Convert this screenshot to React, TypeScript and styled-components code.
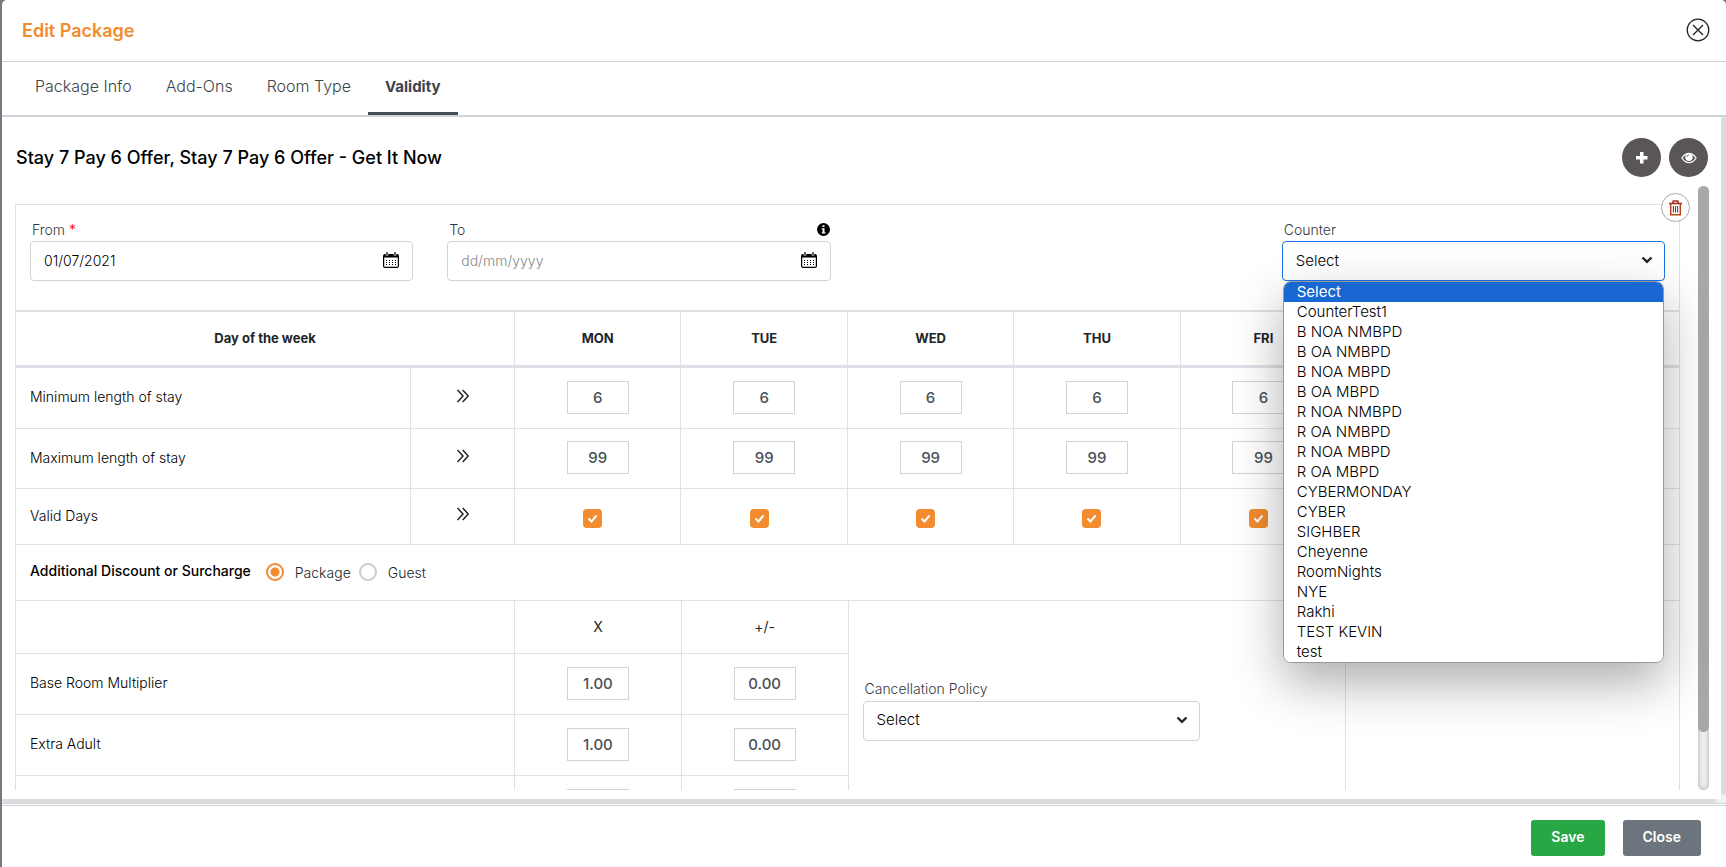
import React, { useState } from "react";
import styled, { createGlobalStyle, css } from "styled-components";

const DAYS = ["MON", "TUE", "WED", "THU", "FRI", "SAT", "SUN"];
const TABS = ["Package Info", "Add-Ons", "Room Type", "Validity"];
const COUNTERS = [
  "Select", "CounterTest1", "B NOA NMBPD", "B OA NMBPD", "B NOA MBPD", "B OA MBPD",
  "R NOA NMBPD", "R OA NMBPD", "R NOA MBPD", "R OA MBPD", "CYBERMONDAY", "CYBER",
  "SIGHBER", "Cheyenne", "RoomNights", "NYE", "Rakhi", "TEST KEVIN", "test",
];
const STAY_RULES = [
  { label: "Minimum length of stay", value: "6", height: 61 },
  { label: "Maximum length of stay", value: "99", height: 60 },
];
const RATES = [
  { label: "Base Room Multiplier", times: "1.00", plus: "0.00" },
  { label: "Extra Adult", times: "1.00", plus: "0.00" },
  { label: "", times: "", plus: "" },
];

const line = "#dee2e6";
const border = "#ced4da";
const orange = "#f28c2e";

const GlobalStyle = createGlobalStyle`
  *, *::before, *::after { box-sizing: border-box; }
  body { margin: 0; background: #77797c; overflow: hidden; }
  body, button, input, select { font-family: Inter, "Liberation Sans", sans-serif; }
`;

const Modal = styled.div`
  display: flex;
  flex-direction: column;
  height: 100vh;
  margin-left: 2px;
  background: #fff;
  border-radius: 5px 5px 0 0;
  color: #212529;
  font-size: 14px;
  overflow: hidden;
`;

const Header = styled.header`
  display: flex;
  align-items: center;
  justify-content: space-between;
  height: 62px;
  padding: 0 16px 1px 20px;
  border-bottom: 1px solid ${border};
  flex: none;
`;

const Title = styled.h1`
  margin: 0;
  color: ${orange};
  font-size: 18px;
  font-weight: 600;
`;

const IconButton = styled.button`
  display: flex;
  padding: 0;
  border: 0;
  background: none;
  color: #212529;
  cursor: pointer;
`;

const TabBar = styled.nav`
  display: flex;
  height: 55px;
  padding-left: 16px;
  border-bottom: 2px solid ${border};
  flex: none;
`;

const Tab = styled.button<{ $active?: boolean }>`
  padding: 0 17px 2px;
  border: 0;
  border-bottom: 3px solid ${(p) => (p.$active ? "#454d55" : "transparent")};
  background: none;
  color: #3d444b;
  font-size: ${(p) => (p.$active ? 15 : 16)}px;
  font-weight: ${(p) => (p.$active ? 700 : 300)};
`;

const Body = styled.div`
  display: flex;
  flex: 1;
  min-height: 0;
`;

const Content = styled.main`
  display: flex;
  flex-direction: column;
  flex: 1;
  min-width: 0;
`;

const TitleRow = styled.div`
  display: flex;
  align-items: center;
  justify-content: space-between;
  height: 69px;
  padding: 12px 13px 0 14px;
  flex: none;
`;

const OfferTitle = styled.h2`
  margin: 0;
  color: #000;
  font-size: 18px;
  font-weight: 500;
`;

const RoundGroup = styled.div`
  display: flex;
  gap: 8px;
`;

const RoundButton = styled.button`
  display: flex;
  align-items: center;
  justify-content: center;
  width: 39px;
  height: 39px;
  padding: 0;
  border: 0;
  border-radius: 50%;
  background: #5b5656;
  color: #fff;
`;

const ScrollArea = styled.div`
  display: flex;
  flex: 1;
  min-height: 0;
  margin-bottom: 9px;
  padding: 0 12px 0 13px;
`;

const Viewport = styled.div`
  flex: 1;
  min-width: 0;
  margin-right: 18px;
  padding-top: 18px;
`;

const Clip = styled.div`
  flex: 1;
  min-height: 0;
  overflow: hidden;
`;

const Track = styled.div`
  width: 11px;
  border-radius: 6px;
  background: #ececec;
  box-shadow: inset 0 0 4px rgba(0, 0, 0, 0.3);
`;

const Thumb = styled.div`
  height: 90.4%;
  border-radius: 6px;
  background: #a8a8a8;
`;

const OuterTrack = styled.div`
  width: 5px;
  background: #f1f1f1;
  flex: none;
`;

const OuterThumb = styled.div`
  height: calc(100% - 4px);
  border-radius: 3px;
  background: #dcdcdc;
`;

const BottomTrack = styled.div`
  height: 4px;
  padding-right: 10px;
  background: #f1f1f1;
  flex: none;
`;

const BottomThumb = styled.div`
  height: 4px;
  border-radius: 2px;
  background: #dcdcdc;
`;

const Card = styled.section`
  position: relative;
  display: flex;
  flex-direction: column;
  border: 1px solid ${line};
  border-bottom: 0;
  height: 100%;
`;

const Trash = styled.button`
  position: absolute;
  top: -12px;
  right: -11px;
  z-index: 2;
  display: flex;
  align-items: center;
  justify-content: center;
  width: 29px;
  height: 29px;
  padding: 0;
  border: 1px solid #aaa;
  border-radius: 50%;
  background: #fff;
  color: #a8281e;
`;

const FieldGrid = styled.div`
  display: grid;
  grid-template-columns: repeat(4, 1fr);
  gap: 34px;
  height: 105px;
  padding: 15px 14px 0;
  flex: none;
`;

const Field = styled.div`
  position: relative;
  min-width: 0;
`;

const LabelRow = styled.div`
  display: flex;
  align-items: center;
  justify-content: space-between;
  height: 21px;
  padding: 0 1px 3px 2px;
`;

const Label = styled.label`
  color: #343a40;
  font-size: 14px;
  font-weight: 300;
`;

const Required = styled.span`
  color: #f00;
`;

const InputBox = styled.div<{ $focus?: boolean }>`
  display: flex;
  align-items: center;
  height: 40px;
  padding: 0 13px 2px 0;
  border: 1px solid ${(p) => (p.$focus ? "#1a73e8" : border)};
  border-radius: 4px;
  background: #fff;
`;

const SelectBox = styled(InputBox)`
  padding-right: 11px;
`;

const controlText = css`
  flex: 1;
  min-width: 0;
  height: 36px;
  padding: 0 13px;
  border: 0;
  outline: 0;
  background: none;
  color: #000;
`;

const DateInput = styled.input`
  ${controlText}
  font-size: 14px;
  font-weight: 300;
  &::placeholder { color: #888; }
`;

const Select = styled.select`
  ${controlText}
  appearance: none;
  font-size: 15px;
  font-weight: 300;
`;

const Menu = styled.ul`
  position: absolute;
  top: 61px;
  left: 1px;
  right: 1px;
  z-index: 3;
  margin: 0;
  padding: 0;
  border: 1px solid #999;
  border-radius: 8px;
  background: #fff;
  box-shadow: 0 20px 50px rgba(0, 0, 0, 0.32);
  list-style: none;
  overflow: hidden;
`;

const Option = styled.li<{ $selected?: boolean }>`
  height: 20px;
  padding-left: 13px;
  background: ${(p) => (p.$selected ? "#1967d2" : "#fff")};
  color: ${(p) => (p.$selected ? "#fff" : "#000")};
  font-size: 15px;
  font-weight: ${(p) => (p.$selected ? 400 : 300)};
  line-height: 20px;
`;

const Table = styled.table`
  width: 100%;
  border-collapse: separate;
  border-spacing: 0;
  table-layout: fixed;
`;

const HeadCell = styled.th`
  height: 58px;
  padding: 0 0 2px;
  border-top: 2px solid ${line};
  border-bottom: 3px solid ${line};
  border-left: 1px solid ${line};
  font-size: 13px;
  font-weight: 700;
  &:first-child { border-left: 0; }
`;

const Cell = styled.td<{ $h: number; $left?: boolean }>`
  height: ${(p) => p.$h}px;
  padding: ${(p) => (p.$left ? "0 14px 3px" : "0 0 2px")};
  border-bottom: 1px solid ${line};
  border-left: 1px solid ${line};
  color: ${(p) => (p.$left ? "#000" : "inherit")};
  font-weight: ${(p) => (p.$left ? 300 : 400)};
  text-align: ${(p) => (p.$left ? "left" : "center")};
  &:first-child { border-left: 0; }
`;

const NumberInput = styled.input`
  display: block;
  width: 62px;
  height: 33px;
  margin: 0 auto;
  padding: 0;
  border: 1px solid ${border};
  border-radius: 0;
  color: #495057;
  font-size: 15px;
  font-weight: 500;
  text-align: center;
`;

const Check = styled.input`
  appearance: none;
  display: block;
  width: 19px;
  height: 19px;
  margin: 6px auto 0;
  border-radius: 4px;
  background: #fff;
  border: 1px solid ${border};
  &:checked {
    border: 0;
    background: ${orange}
      url("data:image/svg+xml,%3Csvg xmlns='http://www.w3.org/2000/svg' viewBox='0 0 19 19'%3E%3Cpath d='M5.5 9.5l3 3 5-6' fill='none' stroke='%23fff' stroke-width='2'/%3E%3C/svg%3E");
  }
`;

const CheckWrap = styled.div`
  padding-right: 10px;
`;

const SurchargeRow = styled.fieldset`
  display: flex;
  align-items: center;
  height: 56px;
  margin: 0;
  padding: 0 14px 1px;
  border: 0;
  border-bottom: 1px solid ${line};
`;

const SurchargeTitle = styled.span`
  margin-right: 15px;
  padding-bottom: 4px;
  font-weight: 500;
  color: #000;
`;

const RadioLabel = styled.label`
  display: flex;
  align-items: center;
  gap: 11px;
  margin-right: 8px;
  color: #212529;
  font-weight: 300;
`;

const Radio = styled.input`
  appearance: none;
  width: 18px;
  height: 18px;
  margin: 0;
  border: 2px solid #ccc;
  border-radius: 50%;
  &:checked {
    border-color: ${orange};
    background: radial-gradient(circle, ${orange} 0 4px, #fff 5px);
  }
`;

const Lower = styled.div`
  display: grid;
  grid-template-columns: 5fr 3fr 2fr;
`;

const PolicyPane = styled.div`
  display: flex;
  flex-direction: column;
  justify-content: center;
  padding: 0 14px 18px;
  border-left: 1px solid ${line};
  border-right: 1px solid ${line};
`;

const PolicyField = styled.div`
  width: 72%;
`;

const Footer = styled.footer`
  display: flex;
  justify-content: flex-end;
  gap: 18px;
  height: 64px;
  padding: 14px 25px 0;
  border-top: 3px double ${border};
  flex: none;
`;

const FooterButton = styled.button<{ $tone: string }>`
  height: 36px;
  padding: 0 20px 3px;
  border: 0;
  border-radius: 3px;
  background: ${(p) => p.$tone};
  color: #fff;
  font-size: 14px;
  font-weight: 600;
`;

const CloseIcon = () => (
  <svg width="24" height="24" viewBox="0 0 24 24" fill="none" stroke="currentColor">
    <circle cx="12" cy="12" r="10.8" strokeWidth="1.3" />
    <path d="M7 7l10 10M17 7L7 17" strokeWidth="1.4" />
  </svg>
);
const PlusIcon = () => (
  <svg width="13" height="13" viewBox="0 0 13 13" fill="currentColor">
    <path d="M5 1h3.500v4h4v3.500h-4v4H5v-4H1V5h4z" />
  </svg>
);
const EyeIcon = () => (
  <svg width="16" height="12" viewBox="0 0 16 12">
    <path d="M1 6C3 2.6 5.3 1.3 8 1.3S13 2.6 15 6C13 9.4 10.7 10.7 8 10.7S3 9.4 1 6z" fill="none" stroke="#fff" strokeWidth="1.3" />
    <circle cx="8" cy="5.2" r="3.7" fill="#fff" />
    <path d="M6 5a2 2 0 0 1 2-2" fill="none" stroke="#5b5656" strokeWidth="0.8" />
  </svg>
);
const TrashIcon = () => (
  <svg width="15" height="16" viewBox="0 0 15 16" fill="none" stroke="currentColor" strokeWidth="1.5">
    <path d="M1 3.5h13M4.500 3.500L5.300 1h4.400l.8 2.500" />
    <path d="M2.700 3.500v11.300h9.600V3.500" stroke="#b5431c" />
    <path d="M5.400 6v6.500M7.500 6v6.500M9.600 6v6.500" stroke="#8a2a55" strokeWidth="1.1" />
  </svg>
);
const CalendarIcon = () => (
  <svg width="16" height="16" viewBox="0 0 16 16">
    <rect x="0.6" y="2.6" width="14.8" height="12.8" rx="1.5" fill="#fff" stroke="#000" strokeWidth="1.2" />
    <path d="M1 2.5h14v3H1z" fill="#000" />
    <path d="M4 0v3.500M12 0v3.500" stroke="#fff" strokeWidth="2.6" />
    <path d="M4 0v3M12 0v3" stroke="#000" strokeWidth="1.2" />
    <path d="M3 8.500h10M3 10.500h10M3 12.500h10" stroke="#000" strokeWidth="1" strokeDasharray="1 2" />
  </svg>
);
const InfoIcon = () => (
  <svg width="13" height="13" viewBox="0 0 13 13">
    <circle cx="6.5" cy="6.5" r="6.5" fill="#000" />
    <path d="M5.500 2.300h2v1.700h-2zM4.800 5.200h2.700v4h.8v1.200H4.800V9.200h.7V6.400h-.7z" fill="#fff" />
  </svg>
);
const ChevronIcon = () => (
  <svg width="12" height="8" viewBox="0 0 12 8" fill="none" stroke="#212529" strokeWidth="2.4">
    <path d="M1.500 1.500L6 5.800l4.500-4.300" />
  </svg>
);
const DoubleArrow = () => (
  <svg width="14" height="14" viewBox="0 0 14 14" fill="none" stroke="#212529" strokeWidth="1.5">
    <path d="M1.500 1l5.500 6-5.500 6M6.700 1l5.500 6-5.500 6" />
  </svg>
);

const DayColumns = () => (
  <colgroup>
    <col style={{ width: "23.7%" }} />
    <col style={{ width: "6.25%" }} />
    {DAYS.map((d) => <col key={d} />)}
  </colgroup>
);

export default function App() {
  const [tab, setTab] = useState("Validity");
  return (
    <>
      <GlobalStyle />
      <Modal role="dialog" aria-label="Edit Package">
        <Header>
          <Title>Edit Package</Title>
          <IconButton aria-label="Close dialog"><CloseIcon /></IconButton>
        </Header>
        <TabBar>
          {TABS.map((t) => (
            <Tab key={t} $active={t === tab} onClick={() => setTab(t)}>{t}</Tab>
          ))}
        </TabBar>
        <Body>
          <Content>
            <TitleRow>
              <OfferTitle>Stay 7 Pay 6 Offer, Stay 7 Pay 6 Offer - Get It Now</OfferTitle>
              <RoundGroup>
                <RoundButton aria-label="Add"><PlusIcon /></RoundButton>
                <RoundButton aria-label="Preview"><EyeIcon /></RoundButton>
              </RoundGroup>
            </TitleRow>
            <ScrollArea>
              <Viewport>
                <Card>
                  <Trash aria-label="Delete"><TrashIcon /></Trash>
                  <FieldGrid>
                    <Field>
                      <LabelRow><Label htmlFor="from">From <Required>*</Required></Label></LabelRow>
                      <InputBox><DateInput id="from" defaultValue="01/07/2021" /><CalendarIcon /></InputBox>
                    </Field>
                    <Field>
                      <LabelRow><Label htmlFor="to">To</Label><InfoIcon /></LabelRow>
                      <InputBox><DateInput id="to" placeholder="dd/mm/yyyy" /><CalendarIcon /></InputBox>
                    </Field>
                    <div />
                    <Field>
                      <LabelRow><Label htmlFor="counter">Counter</Label></LabelRow>
                      <SelectBox $focus>
                        <Select id="counter" defaultValue="Select">
                          {COUNTERS.map((c) => <option key={c}>{c}</option>)}
                        </Select>
                        <ChevronIcon />
                      </SelectBox>
                      <Menu>
                        {COUNTERS.map((c, i) => <Option key={c} $selected={i === 0}>{c}</Option>)}
                      </Menu>
                    </Field>
                  </FieldGrid>
                  <Clip>
                    <Table>
                      <DayColumns />
                      <thead>
                        <tr>
                          <HeadCell colSpan={2}>Day of the week</HeadCell>
                          {DAYS.map((d) => <HeadCell key={d}>{d}</HeadCell>)}
                        </tr>
                      </thead>
                      <tbody>
                        {STAY_RULES.map(({ label, value, height }) => (
                          <tr key={label}>
                            <Cell $h={height} $left>{label}</Cell>
                            <Cell $h={height}><DoubleArrow /></Cell>
                            {DAYS.map((d) => (
                              <Cell key={d} $h={height}>
                                <NumberInput defaultValue={value} aria-label={`${label} ${d}`} />
                              </Cell>
                            ))}
                          </tr>
                        ))}
                        <tr>
                          <Cell $h={56} $left>Valid Days</Cell>
                          <Cell $h={56}><DoubleArrow /></Cell>
                          {DAYS.map((d) => (
                            <Cell key={d} $h={56}>
                              <CheckWrap><Check type="checkbox" defaultChecked aria-label={`Valid ${d}`} /></CheckWrap>
                            </Cell>
                          ))}
                        </tr>
                      </tbody>
                    </Table>
                    <SurchargeRow>
                      <SurchargeTitle>Additional Discount or Surcharge</SurchargeTitle>
                      <RadioLabel><Radio type="radio" name="basis" defaultChecked />Package</RadioLabel>
                      <RadioLabel><Radio type="radio" name="basis" />Guest</RadioLabel>
                    </SurchargeRow>
                    <Lower>
                      <Table>
                        <colgroup><col style={{ width: "59.9%" }} /><col /><col /></colgroup>
                        <tbody>
                          <tr>
                            <Cell $h={53} $left />
                            <Cell $h={53}>X</Cell>
                            <Cell $h={53}>+/-</Cell>
                          </tr>
                          {RATES.map((r) => (
                            <tr key={r.label}>
                              <Cell $h={61} $left>{r.label}</Cell>
                              <Cell $h={61}><NumberInput defaultValue={r.times} aria-label={`${r.label} multiplier`} /></Cell>
                              <Cell $h={61}><NumberInput defaultValue={r.plus} aria-label={`${r.label} adjustment`} /></Cell>
                            </tr>
                          ))}
                        </tbody>
                      </Table>
                      <PolicyPane>
                        <PolicyField>
                          <LabelRow><Label htmlFor="policy">Cancellation Policy</Label></LabelRow>
                          <SelectBox>
                            <Select id="policy"><option>Select</option></Select>
                            <ChevronIcon />
                          </SelectBox>
                        </PolicyField>
                      </PolicyPane>
                    </Lower>
                  </Clip>
                </Card>
              </Viewport>
              <Track><Thumb /></Track>
            </ScrollArea>
          </Content>
          <OuterTrack><OuterThumb /></OuterTrack>
        </Body>
        <BottomTrack><BottomThumb /></BottomTrack>
        <Footer>
          <FooterButton $tone="#28a745">Save</FooterButton>
          <FooterButton $tone="#6c757d">Close</FooterButton>
        </Footer>
      </Modal>
    </>
  );
}
